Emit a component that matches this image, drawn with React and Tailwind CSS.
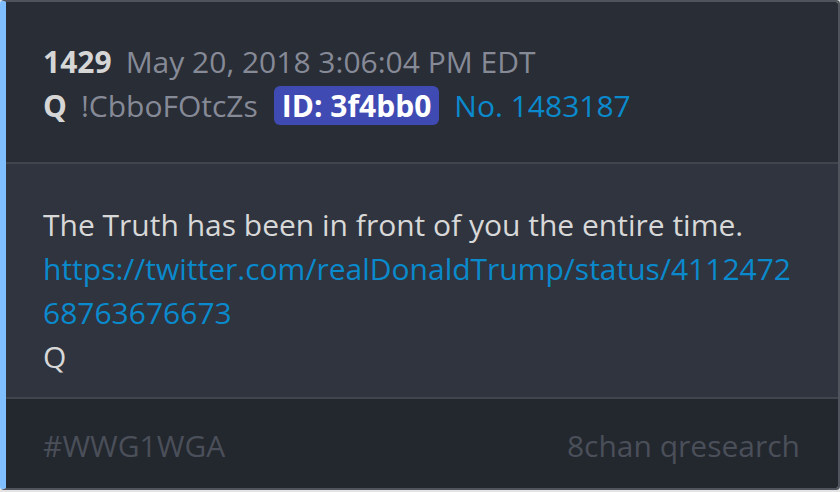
export default function App() {
  return (
    <div className="w-[840px] h-[492px] bg-[#e4e4e4]" style={{ fontFamily: '"Open Sans", "Liberation Sans", sans-serif' }}>
      <div className="w-[840px] h-[490px] flex flex-col overflow-hidden rounded-[4px] border-t-2 border-r-2 border-b-2 border-[#50545c] border-l-[6px] border-l-[#80bfff] text-[30px] leading-[44px]">
        {/* post header */}
        <div className="bg-[#292d35] pl-[37px] pr-[37px] pt-[38px] pb-[34px]">
          <div className="flex items-baseline gap-[14px]">
            <span className="font-bold text-[#d6d6d6]">1429</span>
            <span className="text-[#868a97]">May 20, 2018 3:06:04 PM EDT</span>
          </div>
          <div className="flex items-baseline">
            <span className="font-bold text-[#d6d6d6]">Q</span>
            <span className="ml-[14px] text-[#868a97]">!CbboFOtcZs</span>
            <span className="ml-[16px] rounded-[6px] bg-[#3f4bb3] px-[8px] leading-[39px] font-bold text-white">ID: 3f4bb0</span>
            <span className="ml-[15px] text-[#0a8acd]">No. 1483187</span>
          </div>
        </div>
        {/* post body */}
        <div className="border-t-2 border-[#40454e] bg-[#2f343e] pl-[37px] pr-[37px] pt-[39px] pb-[18px] text-[#d8d8d8]">
          <div>The Truth has been in front of you the entire time.</div>
          <div className="text-[#0a8acd] break-all">https://twitter.com/realDonaldTrump/status/411247268763676673</div>
          <div>Q</div>
        </div>
        {/* post footer */}
        <div className="flex-1 border-t-2 border-[#40454e] bg-[#23272e] pl-[37px] pr-[38px] pt-[25px] flex justify-between text-[#4a4f59]">
          <span>#WWG1WGA</span>
          <span>8chan qresearch</span>
        </div>
      </div>
    </div>
  );
}
